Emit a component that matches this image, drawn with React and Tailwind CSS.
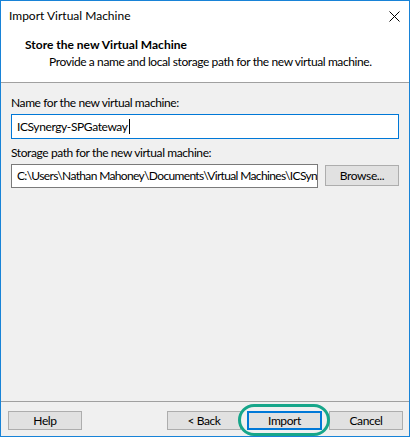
export default function App() {
  const font = { fontFamily: 'Lato, "Segoe UI", "Noto Sans", sans-serif' };
  return (
    <div
      className="w-[410px] h-[437px] border border-[#1883d7] bg-[#f0f0f0] flex flex-col text-[12px] text-black leading-[16px] whitespace-nowrap tracking-[-0.4px]"
      style={font}
    >
      {/* title bar */}
      <div className="h-[29px] bg-white flex items-center justify-between pl-[8px] pr-[9px]">
        <span className="tracking-normal">Import Virtual Machine</span>
        <svg width="11" height="11" viewBox="0 0 11 11" className="mt-[1px]">
          <path d="M0.5 0.5 L10.5 10.5 M10.5 0.5 L0.5 10.5" stroke="#000" strokeWidth="1" />
        </svg>
      </div>

      {/* header */}
      <div className="h-[53px] bg-white border-b border-[#a0a0a0] pl-[24px] pt-[7px]">
        <div className="font-bold tracking-normal">Store the new Virtual Machine</div>
        <div className="pl-[24px] mt-[1px]">
          Provide a name and local storage path for the new virtual machine.
        </div>
      </div>

      {/* body */}
      <div className="flex-1 px-[10px] pt-[12px] flex flex-col">
        <div>Name for the new virtual machine:</div>
        <div className="mt-[3px] h-[25px] w-[388px] border border-[#0078d7] bg-white flex items-center pl-[5px]">
          <span>ICSynergy-SPGateway</span>
          <span className="w-[1px] h-[15px] bg-black ml-[1px]" />
        </div>
        <div className="mt-[6px]">Storage path for the new virtual machine:</div>
        <div className="mt-[3px] flex items-start gap-[7px]">
          <div className="h-[24px] w-[307px] border border-[#7a7a7a] bg-white flex items-center pl-[5px] overflow-hidden tracking-[-0.65px]">
            C:\Users\Nathan Mahoney\Documents\Virtual Machines\ICSyn
          </div>
          <button className="mt-[1px] h-[21px] w-[74px] border border-[#adadad] bg-[#e1e1e1] flex items-center justify-center">
            Browse...
          </button>
        </div>
      </div>

      {/* footer */}
      <div className="border-t border-[#a0a0a0] h-[35px] flex items-start pt-[9px] pl-[7px] pr-[6px]">
        <button className="h-[19px] w-[74px] border border-[#adadad] bg-[#e1e1e1] flex items-center justify-center">
          Help
        </button>
        <div className="flex-1" />
        <button className="h-[19px] w-[74px] border border-[#adadad] bg-[#e1e1e1] flex items-center justify-center">
          &lt; Back
        </button>
        <div className="relative ml-[6px]">
          <button className="h-[19px] w-[75px] border-2 border-[#0078d7] bg-[#e1e1e1] flex items-center justify-center">
            Import
          </button>
          <svg
            className="absolute left-[-9px] top-[-7px] pointer-events-none"
            width="92"
            height="32"
            viewBox="0 0 92 32"
          >
            <rect x="1.5" y="1.5" width="89" height="29" rx="14.5" ry="14.5" fill="none" stroke="#17a68a" strokeWidth="3" />
          </svg>
        </div>
        <button className="ml-[7px] h-[19px] w-[74px] border border-[#adadad] bg-[#e1e1e1] flex items-center justify-center">
          Cancel
        </button>
      </div>
    </div>
  );
}
